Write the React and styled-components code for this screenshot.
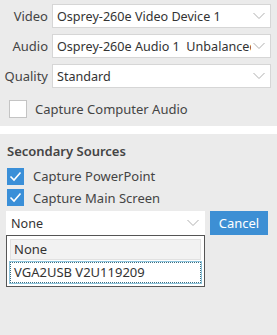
import React from 'react';
import styled, { createGlobalStyle } from 'styled-components';

const GlobalStyle = createGlobalStyle`
    html, body {
        margin: 0;
        padding: 0;
        background: #ebebeb;
    }
    body {
        font-family: 'Noto Sans', 'Open Sans', sans-serif;
        font-size: 12.6px;
        color: #333;
    }
`;

const Page = styled.div`
    width: 277px;
    height: 335px;
    overflow: hidden;
    background: #ebebeb;
`;

const DeviceSection = styled.div`
    display: flex;
    flex-direction: column;
    gap: 6px;
    padding: 4px 6px 0 0;
`;

const FieldRow = styled.div`
    display: grid;
    grid-template-columns: 52px 1fr;
    align-items: center;
`;

const FieldLabel = styled.span`
    text-align: right;
    padding-right: 4px;
    color: #444;
    font-size: 13px;
`;

const SelectBox = styled.div`
    height: 22px;
    display: flex;
    align-items: center;
    justify-content: space-between;
    background: #fff;
    border: 1px solid ${(props) => (props.open ? '#fff' : '#d6d6d6')};
    padding: 0 5px 0 4px;
    color: #333;
    overflow: hidden;
`;

const SelectText = styled.span`
    white-space: pre;
    overflow: hidden;
    flex: 1;
`;

const Chevron = styled.svg`
    width: 12px;
    height: 8px;
    flex-shrink: 0;
    margin-left: 2px;
`;

const CheckRow = styled.label`
    display: flex;
    align-items: center;
    gap: ${(props) => props.gap || 9}px;
    padding-left: ${(props) => props.indent || 7}px;
    height: ${(props) => props.height || 21}px;
    color: #444;
    font-size: 13px;
`;

const Box = styled.span`
    width: ${(props) => (props.checked ? 17 : 18)}px;
    height: ${(props) => (props.checked ? 17 : 18)}px;
    box-sizing: border-box;
    display: flex;
    align-items: center;
    justify-content: center;
    background: ${(props) => (props.checked ? '#3a8fd8' : '#fff')};
    border: 1px solid ${(props) => (props.checked ? '#3a8fd8' : '#c4c4c4')};
`;

const AudioBlock = styled.div`
    padding-top: 10px;
    padding-bottom: 7px;
`;

const Separator = styled.div`
    height: 8px;
    background: #fff;
`;

const SecondarySection = styled.div`
    padding: 8px 0 0;
`;

const SectionTitle = styled.div`
    font-weight: 600;
    font-size: 13px;
    color: #444;
    padding-left: 7px;
    height: 18px;
    line-height: 18px;
    margin-bottom: 5px;
`;

const SourceRow = styled.div`
    display: flex;
    align-items: flex-start;
    gap: 5px;
    padding-left: 6px;
    margin-top: 3px;
`;

const DropdownWrap = styled.div`
    width: 199px;
    display: flex;
    flex-direction: column;
`;

const ListPanel = styled.div`
    background: #fff;
    border: 1px solid #555;
    padding: 3px;
    display: flex;
    flex-direction: column;
    gap: 2px;
`;

const ListItem = styled.div`
    height: 19px;
    line-height: 19px;
    padding-left: 3px;
    background: ${(props) => (props.focused ? '#fff' : '#f2f2f2')};
    border: 1px ${(props) => (props.focused ? 'dotted #3c6e80' : 'solid #e1e1e1')};
    box-shadow: ${(props) => (props.focused ? '0 0 0 1px #8ec5dd' : 'none')};
    color: #333;
    font-size: 13px;
`;

const CancelButton = styled.button`
    width: 58px;
    height: 24px;
    border: none;
    background: #3d8fd4;
    color: #fff;
    font-family: inherit;
    font-size: 13px;
    padding: 0;
`;

const ChevronIcon = () => (
    <Chevron viewBox="0 0 12 8">
        <path d="M0.5 1 L6 6.5 L11.5 1" fill="none" stroke="#b0b0b0" strokeWidth="1" />
    </Chevron>
);

const Tick = () => (
    <svg width="13" height="11" viewBox="0 0 13 11">
        <path d="M1.5 5.5 L5 9 L11.5 1.5" fill="none" stroke="#fff" strokeWidth="1.6" />
    </svg>
);

const devices = [
    { label: 'Video', value: 'Osprey-260e Video Device 1' },
    { label: 'Audio', value: 'Osprey-260e Audio 1  Unbalanced' },
    { label: 'Quality', value: 'Standard' },
];

const App = () => {
    return (
        <Page>
            <GlobalStyle />
            <DeviceSection>
                {devices.map((item) => (
                    <FieldRow key={item.label}>
                        <FieldLabel>{item.label}</FieldLabel>
                        <SelectBox>
                            <SelectText>{item.value}</SelectText>
                            <ChevronIcon />
                        </SelectBox>
                    </FieldRow>
                ))}
            </DeviceSection>
            <AudioBlock>
                <CheckRow indent={9} gap={8}>
                    <Box />
                    Capture Computer Audio
                </CheckRow>
            </AudioBlock>
            <Separator />
            <SecondarySection>
                <SectionTitle>Secondary Sources</SectionTitle>
                <CheckRow height={22}>
                    <Box checked>
                        <Tick />
                    </Box>
                    Capture PowerPoint
                </CheckRow>
                <CheckRow height={21}>
                    <Box checked>
                        <Tick />
                    </Box>
                    Capture Main Screen
                </CheckRow>
                <SourceRow>
                    <DropdownWrap>
                        <SelectBox open>
                            <SelectText>None</SelectText>
                            <ChevronIcon />
                        </SelectBox>
                        <ListPanel>
                            <ListItem>None</ListItem>
                            <ListItem focused>VGA2USB V2U119209</ListItem>
                        </ListPanel>
                    </DropdownWrap>
                    <CancelButton>Cancel</CancelButton>
                </SourceRow>
            </SecondarySection>
        </Page>
    );
};

export default App;
